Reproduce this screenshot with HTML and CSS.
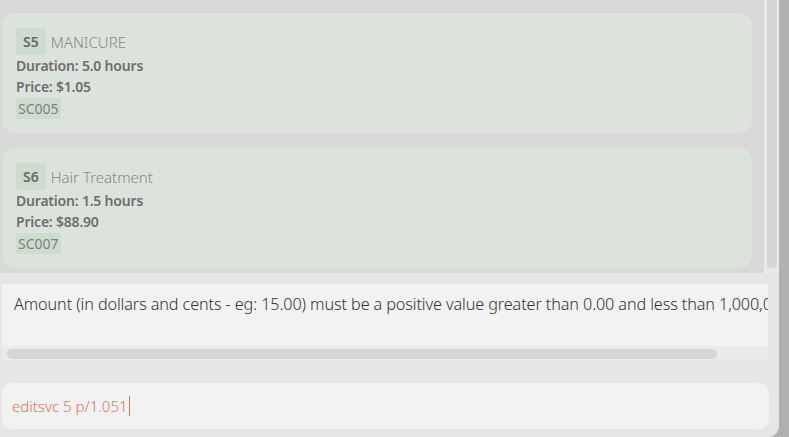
FILE: index.html
```html
<!DOCTYPE html>
<html>
<head>
<meta charset="utf-8">
<link rel="stylesheet" href="styles.css">
</head>
<body>
<div class="window">
  <div class="list-panel">
    <div class="list">
      <div class="card">
        <div class="card-head"><span class="badge">S5</span><span class="name">MANICURE</span></div>
        <div class="line">Duration: 5.0 hours</div>
        <div class="line">Price: $1.05</div>
        <span class="tag">SC005</span>
      </div>
      <div class="card">
        <div class="card-head"><span class="badge">S6</span><span class="name">Hair Treatment</span></div>
        <div class="line">Duration: 1.5 hours</div>
        <div class="line">Price: $88.90</div>
        <span class="tag">SC007</span>
      </div>
    </div>
    <div class="vscroll"><div class="vthumb"></div></div>
  </div>
  <div class="result">
    <div class="result-text">Amount (in dollars and cents - eg: 15.00) must be a positive value greater than 0.00 and less than 1,000,000.00</div>
    <div class="hscroll"><div class="hthumb"></div></div>
  </div>
  <div class="command"><span class="cmd-text">editsvc 5 p/1.051</span><span class="caret"></span></div>
</div>
</body>
</html>
```
FILE: styles.css
```css
html, body {
  margin: 0;
  padding: 0;
  background: #b0b0b0;
  width: 789px;
  height: 437px;
  overflow: hidden;
  font-family: "Noto Sans", "Open Sans", sans-serif;
}
.window {
  width: 779px;
  height: 437px;
  background: #e6e6e6;
  border-radius: 0 0 11px 0;
  display: flex;
  flex-direction: column;
  overflow: hidden;
}
.list-panel {
  height: 273px;
  background: #d9d9d9;
  display: flex;
  flex-shrink: 0;
}
.list {
  width: 752px;
  padding: 13px 12px 0 2px;
  display: flex;
  flex-direction: column;
  gap: 15px;
}
.card {
  height: 120px;
  box-sizing: border-box;
  background: #dce3dc;
  border-radius: 13px;
  padding: 15px 14px 0 14px;
  display: flex;
  flex-direction: column;
  align-items: flex-start;
}
.card-head {
  display: flex;
  align-items: center;
  height: 27px;
}
.badge {
  background: #cedbcf;
  color: #6a6a6a;
  font-weight: 600;
  font-size: 14px;
  height: 27px;
  line-height: 27px;
  padding: 0 7px;
  border-radius: 3px;
}
.name {
  color: #8a8784;
  font-size: 15px;
  margin-left: 5px;
  font-weight: 300;
}
.line {
  color: #6e6e6e;
  font-weight: 600;
  font-size: 14px;
  line-height: 21px;
  letter-spacing: -0.2px;
}
.tag {
  margin-top: 1px;
  background: #cedbcf;
  color: #7e7e7e;
  font-size: 14px;
  line-height: 21px;
  padding: 0 2px;
  border-radius: 2px;
}
.vscroll {
  width: 15px;
  background: #e9e9e9;
  padding: 0 2px 5px 3px;
  box-sizing: border-box;
  display: flex;
}
.vthumb {
  flex: 1;
  background: #d6d6d8;
  border-radius: 0 0 4px 4px;
}
.result {
  margin: 11px 11px 0 2px;
  height: 77px;
  background: #f2f2f2;
  display: flex;
  flex-direction: column;
  overflow: hidden;
  flex-shrink: 0;
}
.result-text {
  flex: 1;
  white-space: nowrap;
  overflow: hidden;
  color: #333;
  font-size: 16.2px;
  font-weight: 300;
  padding: 9px 0 0 12px;
  letter-spacing: -0.1px;
}
.hscroll {
  height: 15px;
  background: #ebebeb;
  padding: 3px 51px 2px 5px;
  box-sizing: border-box;
  display: flex;
}
.hthumb {
  flex: 1;
  background: #d6d6d8;
  border-radius: 5px;
}
.command {
  margin: 22px 10px 0 2px;
  height: 46px;
  background: #f2f2f2;
  border-radius: 10px;
  display: flex;
  align-items: center;
  padding-left: 10px;
  flex-shrink: 0;
}
.cmd-text {
  color: #d9765d;
  font-size: 15px;
  font-weight: 300;
}
.caret {
  width: 1px;
  height: 20px;
  background: #d9765d;
  margin-left: 1px;
}
```
